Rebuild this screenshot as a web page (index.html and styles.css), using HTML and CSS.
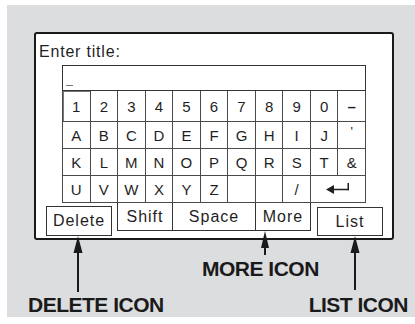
FILE: index.html
```html
<!DOCTYPE html>
<html lang="en">
<head>
    <meta charset="UTF-8">
    <meta name="viewport" content="width=device-width, initial-scale=1.0">
    <title>Enter title</title>
    <link rel="stylesheet" href="styles.css">
</head>
<body>
    <div class="page">
        <div class="frame">
            <div class="panel">
                <div class="title">Enter title:</div>
                <div class="entry"><span class="cursor"></span></div>

                <!-- character keys, 11 columns -->
                <div class="keys">
                    <span class="key key-on">1</span>
                    <span class="key">2</span>
                    <span class="key">3</span>
                    <span class="key">4</span>
                    <span class="key">5</span>
                    <span class="key">6</span>
                    <span class="key">7</span>
                    <span class="key">8</span>
                    <span class="key">9</span>
                    <span class="key">0</span>
                    <span class="key key-dash">&ndash;</span>

                    <span class="key">A</span>
                    <span class="key">B</span>
                    <span class="key">C</span>
                    <span class="key">D</span>
                    <span class="key">E</span>
                    <span class="key">F</span>
                    <span class="key">G</span>
                    <span class="key">H</span>
                    <span class="key">I</span>
                    <span class="key">J</span>
                    <span class="key key-apos">'</span>

                    <span class="key">K</span>
                    <span class="key">L</span>
                    <span class="key">M</span>
                    <span class="key">N</span>
                    <span class="key">O</span>
                    <span class="key">P</span>
                    <span class="key">Q</span>
                    <span class="key">R</span>
                    <span class="key">S</span>
                    <span class="key">T</span>
                    <span class="key">&amp;</span>

                    <span class="key">U</span>
                    <span class="key">V</span>
                    <span class="key">W</span>
                    <span class="key">X</span>
                    <span class="key">Y</span>
                    <span class="key">Z</span>
                    <span class="key"></span>
                    <span class="key"></span>
                    <span class="key">/</span>
                    <span class="key key-enter">
                        <svg width="24" height="12" viewBox="0 0 24 12">
                            <polygon points="0,6.5 8,2 8,11" fill="#1f1f1f"/>
                            <rect x="7" y="5.75" width="16" height="1.5" fill="#1f1f1f"/>
                            <rect x="21.5" y="0" width="1.5" height="7.25" fill="#1f1f1f"/>
                        </svg>
                    </span>
                </div>

                <div class="bottom-row">
                    <span class="btn btn-delete">Delete</span>
                    <div class="mods">
                        <span class="mod mod-shift">Shift</span>
                        <span class="mod mod-space">Space</span>
                        <span class="mod mod-more">More</span>
                    </div>
                    <span class="btn btn-list">List</span>
                </div>
            </div>

            <div class="callouts">
                <div class="callout-more">MORE ICON</div>
                <div class="callout-row">
                    <span>DELETE ICON</span>
                    <span>LIST ICON</span>
                </div>
            </div>
        </div>

        <!-- pointer arrows from the labels up to the buttons -->
        <svg class="pointers" width="415" height="324" viewBox="0 0 415 324">
            <polygon points="78,236 73.5,253 82.5,253" fill="#1a1a1a"/>
            <rect x="77" y="252" width="2" height="40" fill="#1a1a1a"/>

            <polygon points="265,231 261,248 269,248" fill="#1a1a1a"/>
            <rect x="264" y="247" width="2" height="8" fill="#1a1a1a"/>

            <polygon points="355,236 350.5,253 359.5,253" fill="#1a1a1a"/>
            <rect x="354" y="252" width="2" height="38" fill="#1a1a1a"/>
        </svg>
    </div>
</body>
</html>
```

FILE: styles.css
```css
body {
    margin: 0;
    padding: 0;
    background-color: #fff;
    font-family: "Liberation Sans", Arial, sans-serif;
    color: #1f1f1f;
}

.page {
    position: relative; /* for the pointer overlay */
    width: 415px;
    height: 324px;
    overflow: hidden;
}

.frame {
    margin: 5px 0 0 7px;
    width: 408px;
    height: 312px;
    background-color: #dcdddf;
    overflow: hidden;
}

.panel {
    box-sizing: border-box;
    width: 360px;
    height: 208px;
    margin: 27px 0 0 27px;
    border: 2px solid #1a1a1a;
    border-radius: 3px;
    background-color: #fff;
    padding-top: 9px;
}

.title {
    padding-left: 3px;
    font-size: 16px;
    line-height: 18px;
    letter-spacing: 0.8px;
}

.entry {
    box-sizing: border-box;
    width: 304px;
    height: 26px;
    margin: 4px 0 0 26px;
    border: 1px solid #333;
    display: flex;
    align-items: flex-end;
    padding: 0 0 4px 3px;
}

.cursor {
    width: 7px;
    height: 1px;
    background-color: #777;
}

/* grid lines come from the background showing through the gaps */
.keys {
    box-sizing: border-box;
    width: 304px;
    margin-left: 26px;
    padding: 0 1px 1px 1px;
    display: grid;
    grid-template-columns: repeat(11, 1fr);
    grid-template-rows: 30px 26px 26px 26px;
    gap: 1px;
    background-color: #4a4a4a;
}

.key {
    background-color: #fff;
    display: flex;
    align-items: center;
    justify-content: center;
    font-size: 15px;
}

.key-on {
    box-shadow: inset 1px 1px 0 #777;
}

.key-dash {
    font-weight: bold;
}

.key-apos {
    align-items: flex-start;
    padding-top: 2px;
    font-size: 13px;
}

.key-enter {
    grid-column: span 2;
}

.key-enter svg {
    display: block;
}

.bottom-row {
    display: flex;
    align-items: flex-start;
    padding-left: 10px;
    height: 33px;
}

.btn {
    box-sizing: border-box;
    width: 66px;
    border: 1px solid #333;
    display: flex;
    align-items: center;
    justify-content: center;
    font-size: 16px;
    letter-spacing: 1px;
}

.btn-delete {
    height: 30px;
    margin-top: 3px;
}

.btn-list {
    height: 29px;
    margin-top: 4px;
    margin-left: 6px;
}

.mods {
    display: flex;
    margin-left: 5px;
    border-bottom: 1px solid #333;
}

.mod {
    box-sizing: border-box;
    height: 27px;
    display: flex;
    align-items: center;
    justify-content: center;
    border-right: 1px solid #333;
    font-size: 16px;
    letter-spacing: 1px;
}

.mod-shift {
    width: 56px;
    border-left: 1px solid #333;
}

.mod-space {
    width: 83px;
}

.mod-more {
    width: 55px;
}

.callouts {
    font-weight: bold;
    font-size: 21px;
    line-height: 24px;
    letter-spacing: -0.5px;
    color: #1a1a1a;
}

.callout-more {
    margin-top: 17px;
    padding-left: 195px;
}

.callout-row {
    margin-top: 12px;
    display: flex;
    justify-content: space-between;
    padding: 0 7px 0 21px;
}

.pointers {
    position: absolute;
    top: 0;
    left: 0;
}
```
